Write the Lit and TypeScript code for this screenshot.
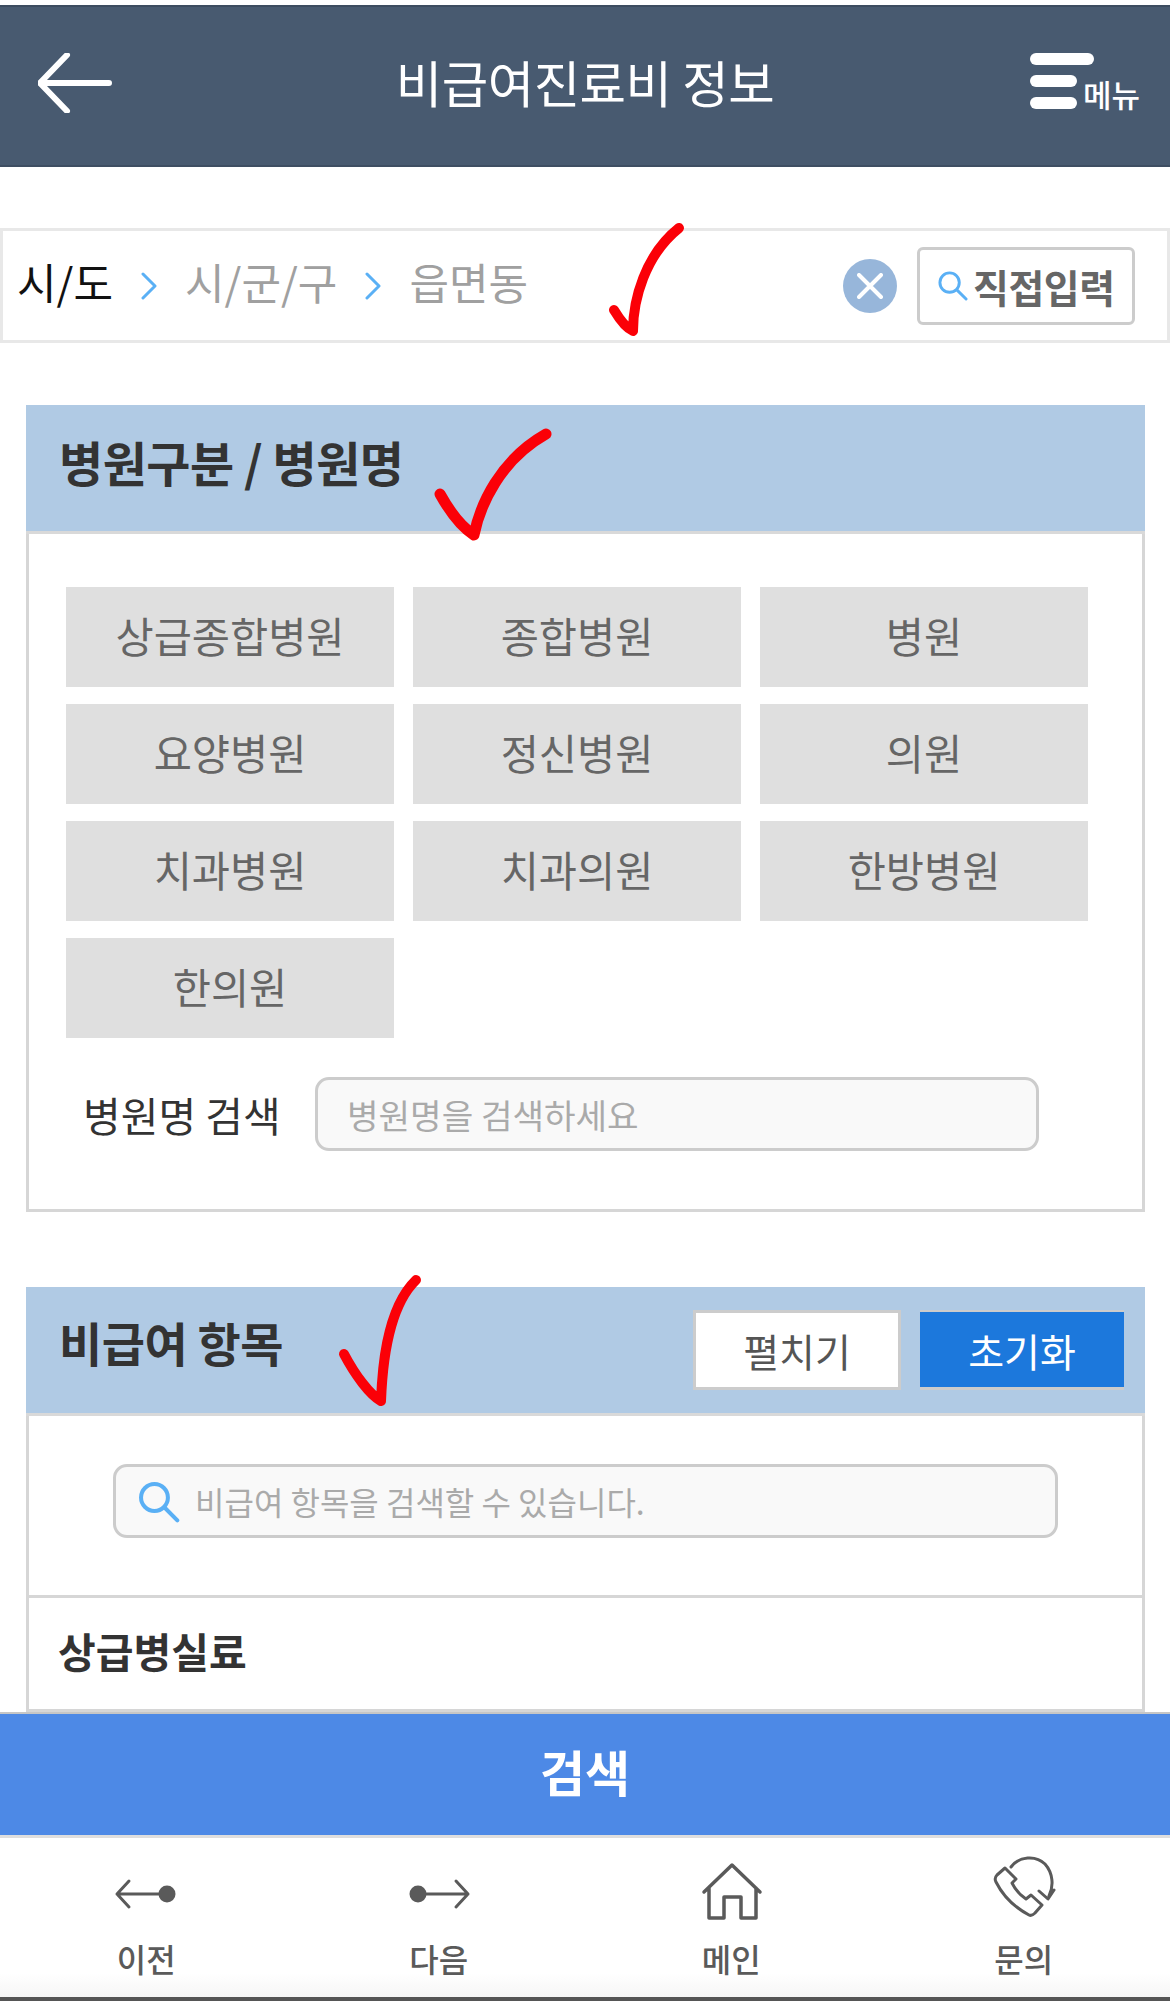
import { LitElement, html, css, svg } from "lit";
import { customElement } from "lit/decorators.js";

const HOSPITALS = ["상급종합병원","종합병원","병원","요양병원","정신병원","의원","치과병원","치과의원","한방병원","한의원"];

const searchIcon = (size: number) => html`<svg class="mag" width=${size} height=${size} viewBox="0 0 32 32" fill="none" stroke="#5ab0f5" stroke-width="3" stroke-linecap="round"><circle cx="13" cy="13" r="10"/><path d="M20.5 20.5 30 30"/></svg>`;

@customElement("app-root")
export class AppRoot extends LitElement {
  static styles = css`
    :host { display: flex; flex-direction: column; width: 1170px; height: 2001px; position: relative; overflow: hidden; background: #fff;
      font-family: "Noto Sans CJK KR", "Noto Sans", sans-serif; padding-top: 5px; box-sizing: border-box; }
    * { box-sizing: border-box; }
    button { font-family: inherit; padding: 0; margin: 0; cursor: pointer; }
    .appbar { flex: none; height: 162px; background: #485a70; border-top: 2px solid #3c4c60; border-bottom: 2px solid #3e4e62; display: grid; grid-template-columns: 200px 1fr 200px; align-items: center; color: #fff; }
    .appbar h1 { margin: 0; text-align: center; font-size: 50.5px; font-weight: 400; letter-spacing: -0.5px; line-height: 1; transform: translateY(-5px); white-space: nowrap; }
    .back { padding: 0 0 6px 38px; display: flex; }
    .menu { justify-self: end; margin-right: 27px; padding-bottom: 10px; display: grid; grid-template-columns: 53px 60px; grid-template-rows: 22px 22px 12px; }
    .menu i { display: block; background: #fff; border-radius: 6px; height: 12px; width: 47px; }
    .menu i:first-child { width: 64px; grid-column: 1 / 3; }
    .menu i:nth-child(2) { grid-column: 1; grid-row: 2; }
    .menu i:nth-child(3) { grid-column: 1; grid-row: 3; }
    .menu span { grid-column: 2; grid-row: 2 / 4; font-size: 31px; font-weight: 500; line-height: 1; white-space: nowrap; letter-spacing: 0; align-self: end; }
    .crumbs { flex: none; margin-top: 61px; height: 115px; border: 3px solid #e8e8e8; display: flex; align-items: center; padding: 0 32px 0 14px; font-size: 43px; color: #a0a0a0; }
    .crumbs .on { color: #111; }
    .crumbs .chev { margin: 0 28px; display: flex; }
    .crumbs .text { line-height: 1; transform: translateY(-4px); white-space: nowrap; }
    .spacer { flex: 1; }
    .clear { width: 54px; height: 54px; border-radius: 50%; background: #97b6da; border: 0; margin-right: 20px; display: flex; align-items: center; justify-content: center; }
    .direct { width: 218px; height: 78px; border: 3px solid #ccc; border-radius: 6px; background: #fff; display: flex; align-items: center; padding-left: 17px; gap: 5px; font-size: 39px; font-weight: 700; color: #666; white-space: nowrap; letter-spacing: -0.5px; }
    .section { flex: none; margin: 0 25px 0 26px; }
    .s1 { margin-top: 62px; }
    .s2 { margin-top: 75px; }
    .head { height: 129px; background: #b0cae4; display: flex; align-items: center; justify-content: space-between; padding: 0 21px 0 33px; border-bottom: 3px solid #d9d9d9; }
    .head h2 { margin: 0; font-size: 48px; font-weight: 700; color: #333; line-height: 1; letter-spacing: -0.5px; transform: translateY(-7px); }
    .s2 .head h2 { font-size: 47px; transform: translateY(-9px); }
    .actions { display: flex; gap: 19px; }
    .actions button { width: 208px; height: 80px; font-size: 39px; border: 3px solid #ccc; background: #fff; color: #555; }
    .actions button.primary { background: #1c78dc; color: #fff; border-color: #ccc; border-width: 2px 0 3px; width: 204px; }
    .body { border: 3px solid #d6d6d6; border-top: 0; }
    .b1 { height: 678px; padding: 53px 0 0 37px; }
    .grid { display: grid; grid-template-columns: repeat(3, 328px); grid-auto-rows: 100px; gap: 17px 19px; }
    .grid button { border: 0; background: #dfdfdf; color: #666; font-size: 41.5px; padding-bottom: 4px; }
    .namerow { display: flex; align-items: center; margin-top: 39px; }
    .namerow label { width: 249px; padding-left: 17px; font-size: 41px; color: #333; white-space: nowrap; }
    .field { height: 74px; border: 3px solid #ccc; border-radius: 14px; background: #f9f9f9; display: flex; align-items: center; color: #aaa; white-space: nowrap; }
    .namerow .field { width: 724px; padding-left: 29px; font-size: 34.3px; }
    .b2 { height: 296px; display: flex; flex-direction: column; }
    .searchwrap { height: 182px; border-bottom: 3px solid #d6d6d6; padding: 48px 0 0 84px; flex: none; }
    .searchwrap .field { width: 945px; padding-left: 21px; gap: 15px; font-size: 32px; }
    .row { flex: 1; display: flex; align-items: center; padding: 0 0 7px 29px; font-size: 41px; font-weight: 700; color: #333; line-height: 1; }
    .go { flex: none; margin-top: 0; height: 123px; background: #4d89e6; color: #fff; border: 0; font-size: 49px; font-weight: 700; border-top: 2px solid #c6c6c6; padding-bottom: 8px; }
    .nav { flex: 1; display: grid; grid-template-columns: repeat(4, 1fr); border-top: 3px solid #dedede; border-bottom: 4px solid #555; background: linear-gradient(#fff 85%, #f6f6f6); }
    .nav a { display: flex; flex-direction: column; align-items: center; padding-top: 18px; color: #5a5a5a; font-size: 32px; font-weight: 500; line-height: 1; }
    .nav svg { display: block; }
    .nav span { margin-top: 22px; }
    .checks { position: absolute; left: 0; top: 0; pointer-events: none; }
  `;

  render() {
    return html`
      <header class="appbar">
        <div class="back"><svg width="74" height="60" viewBox="0 0 74 60" fill="none" stroke="#fff" stroke-width="6" stroke-linecap="round" stroke-linejoin="round"><path d="M2 30H71M29 2 2 30l27 28"/></svg></div>
        <h1>비급여진료비 정보</h1>
        <div class="menu"><i></i><i></i><i></i><span>메뉴</span></div>
      </header>

      <nav class="crumbs">
        <span class="text on">시/도</span>
        <span class="chev"><svg width="16" height="28" viewBox="0 0 16 28" fill="none" stroke="#5ab0f5" stroke-width="3" stroke-linecap="round" stroke-linejoin="round"><path d="M2 2 14 14 2 26"/></svg></span>
        <span class="text">시/군/구</span>
        <span class="chev"><svg width="16" height="28" viewBox="0 0 16 28" fill="none" stroke="#5ab0f5" stroke-width="3" stroke-linecap="round" stroke-linejoin="round"><path d="M2 2 14 14 2 26"/></svg></span>
        <span class="text">읍면동</span>
        <span class="spacer"></span>
        <button class="clear" aria-label="지우기"><svg width="26" height="26" viewBox="0 0 26 26" stroke="#fff" stroke-width="4" stroke-linecap="round"><path d="M2 2 24 24M24 2 2 24"/></svg></button>
        <button class="direct">${searchIcon(31)}직접입력</button>
      </nav>

      <section class="section s1">
        <div class="head"><h2>병원구분 / 병원명</h2></div>
        <div class="body b1">
          <div class="grid">${HOSPITALS.map((h) => html`<button>${h}</button>`)}</div>
          <div class="namerow"><label>병원명 검색</label><div class="field">병원명을 검색하세요</div></div>
        </div>
      </section>

      <section class="section s2">
        <div class="head"><h2>비급여 항목</h2>
          <div class="actions"><button>펼치기</button><button class="primary">초기화</button></div>
        </div>
        <div class="body b2">
          <div class="searchwrap"><div class="field">${searchIcon(43)}비급여 항목을 검색할 수 있습니다.</div></div>
          <div class="row">상급병실료</div>
        </div>
      </section>

      <button class="go">검색</button>

      <footer class="nav">
        <a><svg width="64" height="64" viewBox="0 0 64 64" fill="none" stroke="#5a5a5a" stroke-width="3" stroke-linecap="round" stroke-linejoin="round"><path d="M3 38H52M15 25 3 38l12 13"/><circle cx="53" cy="38" r="8.5" fill="#5a5a5a" stroke="none"/></svg><span>이전</span></a>
        <a><svg width="64" height="64" viewBox="0 0 64 64" fill="none" stroke="#5a5a5a" stroke-width="3" stroke-linecap="round" stroke-linejoin="round"><path d="M61 38H12M49 25l12 13-12 13"/><circle cx="11" cy="38" r="8.5" fill="#5a5a5a" stroke="none"/></svg><span>다음</span></a>
        <a><svg width="64" height="64" viewBox="0 0 64 64" fill="none" stroke="#5a5a5a" stroke-width="3.5" stroke-linecap="round" stroke-linejoin="round"><path d="M5 36 33 9l28 27M10 32V62H25V41H42V62H57V32"/></svg><span>메인</span></a>
        <a><svg width="64" height="64" viewBox="0 0 64 64" fill="none" stroke="#5a5a5a" stroke-width="3" stroke-linecap="round" stroke-linejoin="round"><path d="M19 11C27 0 44-1 53 8 61 17 62 30 57 40M47 35l9 8 6-9"/><path d="M13 12 5 19C3 21 3 24 4 26 11 40 22 51 37 59 39 60 41 59 43 57L50 49 39 39 34 43C28 39 23 33 20 27L24 23Z"/></svg><span>문의</span></a>
      </footer>

      <svg class="checks" width="1170" height="2001" viewBox="0 0 1170 2001" fill="none" stroke="#fb0007" stroke-linecap="round" stroke-linejoin="round">
        ${svg`<path stroke-width="10" d="M614 310C620 320 626 328 633 331 633 300 645 255 679 228"/>
        <path stroke-width="11" d="M440 494C450 512 460 526 474 535 480 505 500 460 546 434"/>
        <path stroke-width="10" d="M344 1354C355 1375 370 1395 381 1401 382 1375 385 1310 416 1280"/>`}
      </svg>
    `;
  }
}
